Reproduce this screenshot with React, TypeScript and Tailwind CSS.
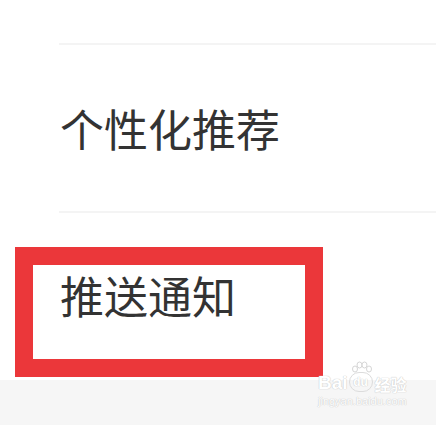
import React from "react";

export default function App() {
  return (
    <div className="relative w-[436px] h-[425px] bg-white overflow-hidden flex flex-col font-['Noto_Sans_CJK_SC','Noto_Sans',sans-serif] text-[#333333]">
      <div className="h-[43px] shrink-0" />
      <div className="ml-[59px] h-[2px] bg-[#f4f4f4] shrink-0" />
      <div className="h-[166px] shrink-0 pl-[60px] flex items-center text-[44px] leading-none">
        个性化推荐
      </div>
      <div className="ml-[59px] h-[2px] bg-[#f4f4f4] shrink-0" />
      <div className="h-[34px] shrink-0" />
      <div className="ml-[15px] w-[308px] h-[130px] shrink-0 border-[18px] border-[#eb373a] pl-[27px] pt-[8px] text-[44px] leading-none">
        推送通知
      </div>
      <div className="h-[3px] shrink-0" />
      <div className="flex-1 bg-[#f6f6f6]" />
      <div className="absolute left-[318px] top-[372px] flex flex-col items-start text-white [text-shadow:0_0_1px_#c8c8c8,0_0_1px_#c8c8c8]">
        <div className="flex items-end font-['Liberation_Sans',sans-serif] font-bold text-[19px] leading-none">
          <span>Bai</span>
          <span className="relative mx-[1px] inline-flex items-center justify-center w-[24px] h-[20px] rounded-[10px] border border-[#dcdcdc] text-[12px]">
            du
            <svg className="absolute -top-[12px] left-[1px]" width="22" height="12" viewBox="0 0 22 12">
              <ellipse cx="4" cy="8" rx="2.5" ry="3" fill="white" stroke="#d6d6d6" />
              <ellipse cx="8.5" cy="4" rx="2.5" ry="3" fill="white" stroke="#d6d6d6" />
              <ellipse cx="13.5" cy="4" rx="2.5" ry="3" fill="white" stroke="#d6d6d6" />
              <ellipse cx="18" cy="8" rx="2.5" ry="3" fill="white" stroke="#d6d6d6" />
            </svg>
          </span>
          <span className="font-['Noto_Sans_CJK_SC',sans-serif] text-[16px] ml-[1px]">经验</span>
        </div>
        <div className="mt-[4px] font-['Liberation_Sans',sans-serif] text-[11px] leading-none">jingyan.baidu.com</div>
      </div>
    </div>
  );
}
